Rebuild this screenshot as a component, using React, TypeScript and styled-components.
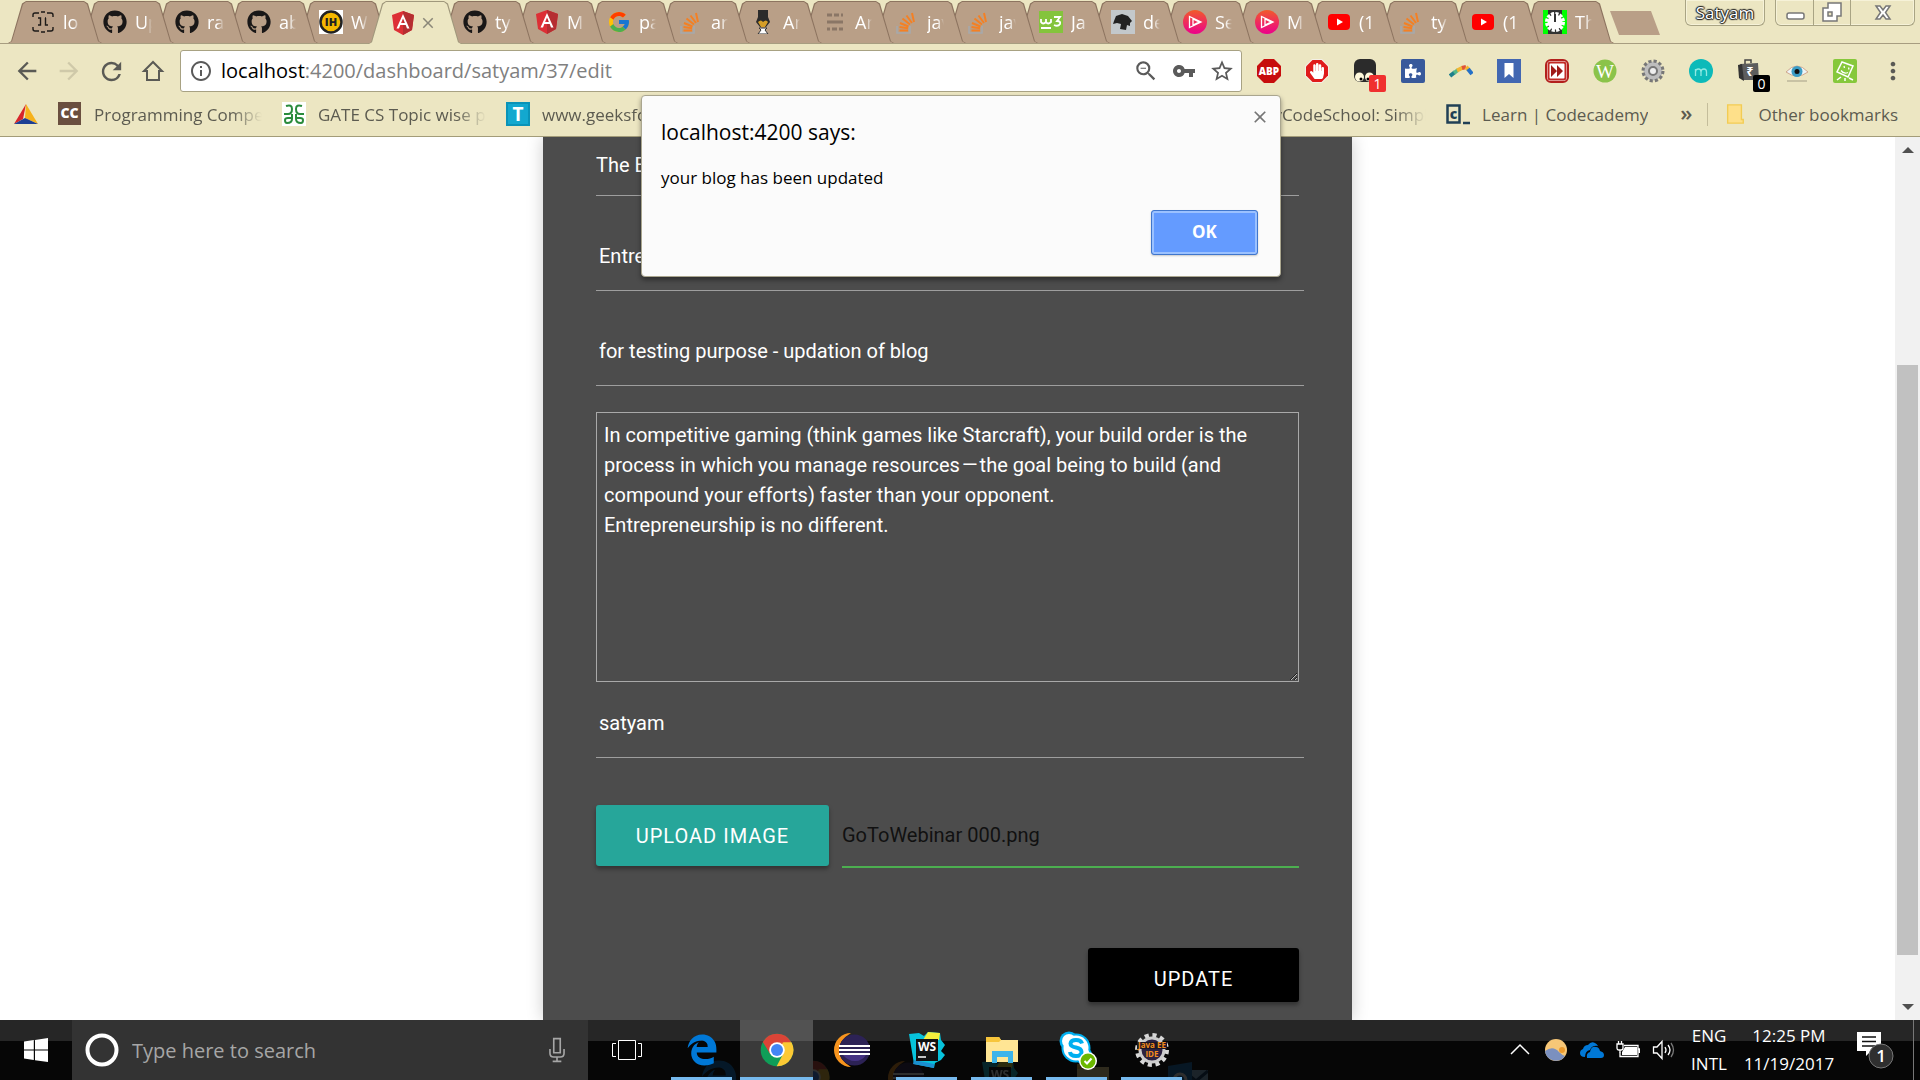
import React from 'react';
import styled, { createGlobalStyle } from 'styled-components';
import { FaGithub, FaHandPaper, FaPuzzlePiece } from 'react-icons/fa';
import { FaEdgeLegacy } from 'react-icons/fa6';
import { FcGoogle } from 'react-icons/fc';
import {
  MdArrowBack, MdArrowForward, MdRefresh, MdInfoOutline, MdZoomOut, MdVpnKey, MdStarBorder, MdMoreVert, MdClose,
} from 'react-icons/md';

const ui = '"Open Sans", "Noto Sans", sans-serif';

const Global = createGlobalStyle`
  * { box-sizing: border-box; }
  body { margin: 0; background: #fff; font-family: ${ui}; }
  button, input, textarea { font: inherit; margin: 0; border: 0; padding: 0; background: none; color: inherit; outline: none; }
  svg { display: block; flex: none; }
`;

const Screen = styled.div`
  position: relative;
  display: flex;
  flex-direction: column;
  height: 100vh;
  overflow: hidden;
`;

/* ---------- Browser frame ---------- */

const Frame = styled.header`
  flex: none;
  background: #ece6c2;
  border-bottom: 1px solid #a39c79;
`;

const TitleBar = styled.div`
  display: flex;
  height: 44px;
  padding-left: 8px;
  border-bottom: 1px solid #a79d80;
`;

const TabStrip = styled.nav`
  display: flex;
  flex: 1;
  min-width: 0;
  padding-top: 1px;
`;

const shape = 'polygon(0 100%, 3px 96%, 14px 6%, 18px 0, 76px 0, 80px 6%, 91px 96%, 94px 100%)';

const Tab = styled.button<{ $active?: boolean; $order: number }>`
  position: relative;
  z-index: ${(p) => (p.$active ? 40 : p.$order)};
  display: flex;
  flex: none;
  align-items: center;
  width: 94px;
  height: ${(p) => (p.$active ? 43 : 42)}px;
  margin-right: -22px;
  padding-left: 23px;
  gap: ${(p) => (p.$active ? 4 : 8)}px;
  isolation: isolate;
  color: #fff;
  font-size: 18px;
  &::before, &::after {
    content: '';
    position: absolute;
    z-index: -1;
    clip-path: ${shape};
    width: 94px;
    inset: 0;
    background: ${(p) => (p.$active ? '#a0987c' : '#8d7460')};
  }
  &::after {
    inset: 1px 0 0 0;
    width: 92px;
    margin-left: 1px;
    clip-path: polygon(0 100%, 3px 96%, 14px 6%, 17px 0, 75px 0, 78px 6%, 89px 96%, 92px 100%);
    background: ${(p) => (p.$active ? '#ece6c2' : '#b99f87')};
  }
`;

const TabTitle = styled.span`
  width: 17px;
  overflow: hidden;
  text-align: left;
  white-space: nowrap;
  mask-image: linear-gradient(90deg, #000 60%, transparent);
`;

const NewTab = styled.button`
  width: 50px;
  height: 24px;
  margin: 10px 0 0 18px;
  background: #b99f87;
  clip-path: polygon(0 0, 41px 0, 50px 100%, 9px 100%);
`;

const WindowControls = styled.div`
  display: flex;
  flex: none;
  gap: 10px;
  padding-right: 5px;
`;

const Glass = styled.div`
  display: flex;
  height: 26px;
  border: 1px solid #a9a484;
  border-top: 0;
  border-radius: 0 0 6px 6px;
  box-shadow: inset 0 0 0 1px #f6f2d8;
`;

const Profile = styled.button`
  width: 78px;
  color: #fff;
  font-size: 17px;
  line-height: 25px;
  text-shadow: 0 0 2px #222, 1px 0 1px #222, -1px 0 1px #222, 0 1px 1px #222, 0 -1px 1px #222;
`;

const WindowButton = styled.button<{ $wide?: boolean }>`
  display: grid;
  place-items: center;
  width: ${(p) => (p.$wide ? 64 : 37)}px;
  & + & { border-left: 1px solid #a9a484; }
`;

const Toolbar = styled.div`
  display: flex;
  align-items: center;
  height: 54px;
  padding: 0 3px 0 6px;
`;

const NavButton = styled.button<{ $dim?: boolean }>`
  display: grid;
  flex: none;
  place-items: center;
  width: 42px;
  height: 42px;
  color: ${(p) => (p.$dim ? '#cfc9a9' : '#5a5a55')};
`;

const Omnibox = styled.div`
  display: flex;
  flex: 1;
  align-items: center;
  height: 42px;
  margin: 0 3px 0 6px;
  padding: 0 8px;
  border: 1px solid #a8a283;
  border-radius: 3px;
  background: #fff;
  color: #5a5a5a;
`;

const Url = styled.div`
  flex: 1;
  margin-left: 8px;
  font-size: 20px;
  line-height: 40px;
  color: #808080;
  b { color: #000; font-weight: 400; }
`;

const OmniButton = styled.button`
  display: grid;
  place-items: center;
  width: 38px;
  height: 38px;
  &:last-child { width: 24px; margin-left: 6px; }
`;

const Extension = styled.button`
  position: relative;
  display: grid;
  flex: none;
  place-items: center;
  width: 48px;
  height: 42px;
`;

const Badge = styled.span<{ $bg: string }>`
  position: absolute;
  right: 3px;
  bottom: 0;
  width: 17px;
  height: 17px;
  border-radius: 2px;
  background: ${(p) => p.$bg};
  color: #fff;
  font-size: 14px;
  line-height: 17px;
  text-align: center;
`;

const Bookmarks = styled.nav`
  display: flex;
  align-items: center;
  height: 38px;
  padding: 0 22px 6px 14px;
  color: #5c5b50;
  font-size: 17px;
`;

const Bookmark = styled.a<{ $clip?: boolean }>`
  display: flex;
  flex: none;
  align-items: center;
  gap: 12px;
  margin-right: 20px;
  color: inherit;
  text-decoration: none;
  white-space: nowrap;
  span {
    width: ${(p) => (p.$clip ? '168px' : 'auto')};
    overflow: hidden;
    mask-image: ${(p) => (p.$clip ? 'linear-gradient(90deg, #000 82%, transparent)' : 'none')};
  }
`;

const BookmarkEnd = styled.div`
  display: flex;
  align-items: center;
  margin-left: auto;
`;

const More = styled.button`
  margin: 0 15px 4px 12px;
  font-size: 22px;
  font-weight: 600;
  line-height: 24px;
`;

const Folder = styled(Bookmark)`
  margin: 0;
  padding-left: 16px;
  border-left: 1px solid #c4bd9b;
`;

/* ---------- Web page ---------- */

const Viewport = styled.div`
  display: flex;
  flex: 1;
  min-height: 0;
`;

const Page = styled.main`
  flex: 1;
  overflow: hidden;
  background: #fff;
  font-family: Roboto, sans-serif;
  font-size: 20px;
`;

const Panel = styled.form`
  width: 100%;
  max-width: 809px;
  min-height: 100%;
  margin: 0 auto;
  padding: 0 53px;
  background: #4c4c4c;
  box-shadow: 0 0 16px rgba(0, 0, 0, 0.2);
  color: #fff;
`;

const Field = styled.input<{ $first?: boolean; $near?: boolean }>`
  display: block;
  width: ${(p) => (p.$first ? '100%' : 'calc(100% + 5px)')};
  height: ${(p) => (p.$first ? 59 : 69)}px;
  margin-top: ${(p) => (p.$first ? 0 : p.$near ? 7 : 26)}px;
  padding-bottom: ${(p) => (p.$first ? 2 : 0)}px;
  padding-left: ${(p) => (p.$first ? 0 : 3)}px;
  border-bottom: 1px solid #9e9e9e;
`;

const Story = styled.textarea`
  display: block;
  width: 100%;
  height: 270px;
  margin-top: 26px;
  padding: 7px;
  border: 1px solid #a9a9a9;
  line-height: 30px;
  resize: vertical;
`;

const UploadRow = styled.div`
  display: flex;
  gap: 13px;
  height: 61px;
  margin-top: 47px;
`;

const Action = styled.button<{ $dark?: boolean }>`
  flex: none;
  width: ${(p) => (p.$dark ? 211 : 233)}px;
  height: ${(p) => (p.$dark ? 54 : 61)}px;
  padding-top: ${(p) => (p.$dark ? 8 : 0)}px;
  border-radius: 3px;
  background: ${(p) => (p.$dark ? '#000' : '#26a69a')};
  box-shadow: 0 3px 4px rgba(0, 0, 0, 0.35);
  letter-spacing: 1px;
`;

const FileName = styled.input`
  flex: 1;
  min-width: 0;
  height: 63px;
  padding-bottom: 1px;
  border-bottom: 2px solid #4caf50;
  color: #111;
`;

const SubmitRow = styled.div`
  display: flex;
  justify-content: flex-end;
  margin-top: 82px;
`;

const Scrollbar = styled.div`
  display: flex;
  flex: none;
  flex-direction: column;
  width: 25px;
  padding: 0 2px;
  background: #f1f1f1;
`;

const Arrow = styled.button`
  display: grid;
  place-items: center;
  height: 26px;
`;

const Track = styled.div<{ $grow: number; $thumb?: boolean }>`
  flex: ${(p) => p.$grow} 0 0;
  background: ${(p) => (p.$thumb ? '#c1c1c1' : 'transparent')};
`;

/* ---------- Alert ---------- */

const Dialog = styled.section`
  position: absolute;
  z-index: 60;
  top: 95px;
  left: calc(50% + 1px);
  display: flex;
  flex-direction: column;
  width: 640px;
  height: 182px;
  padding: 18px 22px 21px 19px;
  border: 1px solid #aaa68f;
  border-radius: 4px;
  background: #fbfbfb;
  box-shadow: 0 3px 5px rgba(0, 0, 0, 0.4);
  color: #000;
  transform: translateX(-50%);
  h1 { margin: 0; font-size: 21px; font-weight: 400; line-height: 36px; }
  p { margin: 14px 0 0; font-size: 17px; line-height: 28px; }
`;

const CloseButton = styled.button`
  position: absolute;
  top: 11px;
  right: 10px;
  color: #757575;
`;

const OkButton = styled.button`
  align-self: flex-end;
  width: 107px;
  height: 45px;
  margin-top: auto;
  padding-bottom: 3px;
  border: 1px solid #3f76cd;
  border-radius: 3px;
  background: #649bff;
  box-shadow: inset 0 0 0 2px #9bc1ff, 0 1px 2px rgba(0, 0, 0, 0.2);
  color: #fff;
  font-size: 17px;
  font-weight: 700;
`;

/* ---------- Taskbar ---------- */

const Taskbar = styled.footer`
  position: relative;
  display: flex;
  flex: none;
  height: 60px;
  overflow: hidden;
  isolation: isolate;
  background: linear-gradient(#262626 21px, #060606 21px);
  color: #fff;
`;

const Reflections = styled.div`
  position: absolute;
  z-index: -1;
  top: 40px;
  left: 700px;
  display: flex;
  gap: 58px;
  opacity: 0.16;
`;

const Start = styled.button`
  display: grid;
  place-items: center;
  width: 72px;
`;

const Search = styled.label`
  display: flex;
  align-items: center;
  width: 516px;
  padding: 0 18px 0 13px;
  background: #333;
  color: #a6a6a6;
  input {
    flex: 1;
    margin-left: 13px;
    font-size: 20px;
    &::placeholder { color: #a6a6a6; opacity: 1; }
  }
`;

const Apps = styled.nav`
  display: flex;
  gap: 2px;
  margin-left: 2px;
`;

const AppButton = styled.button<{ $open?: boolean; $active?: boolean }>`
  position: relative;
  display: grid;
  place-items: center;
  width: 73px;
  background: ${(p) => (p.$active ? 'linear-gradient(#525252 21px, #3a3a3a 21px)' : 'none')};
  &::after {
    content: '';
    position: absolute;
    right: ${(p) => (p.$active ? 0 : 6)}px;
    bottom: 0;
    left: ${(p) => (p.$active ? 0 : 6)}px;
    height: 3px;
    background: ${(p) => (p.$open || p.$active ? '#76b9ed' : 'none')};
  }
`;

const Tray = styled.div`
  display: flex;
  align-items: center;
  margin-left: auto;
`;

const TrayButton = styled.button<{ $width: number }>`
  display: grid;
  place-items: center;
  width: ${(p) => p.$width}px;
  height: 60px;
  font-size: 17px;
  line-height: 28px;
  text-align: center;
  white-space: nowrap;
`;

const ShowDesktop = styled.button`
  width: 7px;
  height: 60px;
  margin-left: 5px;
  border-left: 1px solid #777;
`;

/* ---------- Drawings ---------- */

const Svg = ({ s = 24, vb = '0 0 24 24', children }: { s?: number; vb?: string; children: React.ReactNode }) => (
  <svg width={s} height={s} viewBox={vb} aria-hidden="true">{children}</svg>
);

const Angular = () => (
  <Svg>
    <path d="M12 0 23 4l-2 15-9 5-9-5L1 4z" fill="#dd2f35" />
    <path d="M12 0 23 4l-2 15-9 5z" fill="#b52e31" />
    <path d="m12 3-6.500 14.500H8L9.300 14h5.400L16 17.500h2.500zm0 4.500L13.900 12h-3.800z" fill="#fff" />
  </Svg>
);
const Brackets = () => (
  <Svg>
    <g fill="none" stroke="#1d1a18" strokeWidth="1.400">
      <path d="M2 7V5q0-2 2-2h4M10 2h4M16 3h4q2 0 2 2v2M2 17v2q0 2 2 2h4M10 22h4M16 21h4q2 0 2-2v-2" />
      <path d="M7 8h2.500v7H7M14.500 8v7H17M14 8h1" />
    </g>
  </Svg>
);
const Hackers = () => (
  <Svg>
    <path d="M0 0h24v24H0z" fill="#fff" />
    <circle cx="12" cy="12" r="10.500" fill="#f5b800" stroke="#222" strokeWidth="2.500" />
    <text x="12" y="16" textAnchor="middle" fontSize="11" fontWeight="800" fill="#222">IH</text>
  </Svg>
);
const Stack = () => (
  <Svg>
    <path d="M2 16v7h13v-7" fill="none" stroke="#a7a9ac" strokeWidth="1.600" />
    <path d="M4.500 20.500H13M4.500 17l8.500 1.300M5 13l8.500 3.500M7.500 8.500l7.500 6M11.500 5.500l5.500 7.500M17 3l2 9" stroke="#f48024" strokeWidth="2" />
  </Svg>
);
const Lamp = () => (
  <Svg>
    <path d="M7 0h10v7l2 5-4 5H9l-4-5 2-5z" fill="#2b2b2b" />
    <path d="M7 12q3-3 5 0 3-3 5 0l-3 5h-4z" fill="#d59e28" />
    <path d="M8 18h8l-2 2 3 4H7l3-4z" fill="#fff" stroke="#333" />
  </Svg>
);
const Lines = () => (
  <Svg><path d="M4 5h5M11 5h5M18 5h2M4 12h16M4 19h3M9 19h5M16 19h4" stroke="#8a7666" strokeWidth="3" /></Svg>
);
const W3 = () => (
  <Svg>
    <path d="M0 1h24v22H0z" fill="#84c43c" />
    <path d="M2 9v3q2 3 5 0V9m0 3q2 3 5 0V9M15 7h6l-3 4q4 0 3 3-2 3-6 1M2 18h10" fill="none" stroke="#fff" strokeWidth="1.800" />
  </Svg>
);
const Dog = () => (
  <Svg>
    <path d="M0 0h24v24H0z" fill="#c3c8cb" />
    <path d="m3 11 2-5 6-2 6 2 4 5-2 2v3l-3-1-1 5-6-1 1-5-4-1-4 1z" fill="#222" />
  </Svg>
);
const Play = () => (
  <Svg>
    <defs><linearGradient id="play" x2="0" y2="1"><stop stopColor="#f15b2a" /><stop offset="1" stopColor="#ec008c" /></linearGradient></defs>
    <circle cx="12" cy="12" r="12" fill="url(#play)" />
    <path d="M6.500 6.500v11L18 12zM10 9v6l6-3z" fill="none" stroke="#fff" strokeWidth="1.300" />
  </Svg>
);
const Tube = () => (
  <Svg><rect x="1" y="4" width="22" height="16" rx="4" fill="#f00" /><path d="m10 8.500 6 3.500-6 3.500z" fill="#fff" /></Svg>
);
const Clock = () => (
  <Svg>
    <path d="M0 0h24v24H0z" fill="#0f0" /><path d="M5 0h14v24H5z" fill="#333" />
    <circle cx="12" cy="12" r="8" fill="none" stroke="#fff" strokeWidth="4" strokeDasharray="3 1.200" />
    <circle cx="12" cy="12" r="7.500" fill="#fff" />
    <path d="M12 4v8" stroke="#333" strokeWidth="2" />
  </Svg>
);
const Home = () => (
  <Svg><path d="M12 3 3 12h3v9h12v-9h3z" fill="none" stroke="currentColor" strokeWidth="2" /></Svg>
);

const octagon = 'M7 0h10l7 7v10l-7 7H7l-7-7V7z';
const Abp = () => (
  <Svg><path d={octagon} fill="#c70d0d" /><text x="12" y="16" textAnchor="middle" fontSize="10" fontWeight="800" fill="#fff">ABP</text></Svg>
);
const Hand = () => (
  <Svg>
    <path d={octagon} fill="#f4f0e6" /><path d="M7.500 1h9L23 7.500v9L16.500 23h-9L1 16.500v-9z" fill="#e01b1b" />
    <g transform="translate(4 4)" color="#fff"><FaHandPaper size={16} /></g>
  </Svg>
);
const Monkey = () => (
  <Svg>
    <rect x="1" y="0" width="22" height="23" rx="6" fill="#2b2b2b" />
    <circle cx="6.500" cy="18" r="4.500" fill="#fff9dc" /><circle cx="16.500" cy="18" r="4.500" fill="#fff9dc" />
    <circle cx="8" cy="20" r="1.500" /><circle cx="15" cy="20" r="1.500" />
  </Svg>
);
const Puzzle = () => (
  <Svg><rect width="24" height="24" rx="2" fill="#38599b" /><g transform="translate(4 4)" color="#fff"><FaPuzzlePiece size={16} /></g></Svg>
);
const Boomerang = () => (
  <Svg>
    <g fill="none" strokeWidth="4">
      <path d="m1 17 5-4" stroke="#1d7f8c" /><path d="m5 14 4-3" stroke="#52b788" /><path d="m8 11.500 6-3" stroke="#f2b632" />
      <path d="m13 9 4-1" stroke="#e0533a" /><path d="m17 8 3 3" stroke="#f2b632" /><path d="m19 10 4 5" stroke="#2470c8" />
    </g>
  </Svg>
);
const Ribbon = () => (
  <Svg><path d="M0 0h24v24H0z" fill="#4267b2" /><path d="M7.500 4h9v15L12 15l-4.500 4z" fill="#fff" /></Svg>
);
const Forward = () => (
  <Svg>
    <rect x="1" y="1" width="22" height="22" rx="5" fill="#fff" stroke="#b3201d" strokeWidth="2" />
    <rect x="3.500" y="3.500" width="17" height="17" rx="2" fill="#fff" stroke="#c22a25" strokeWidth="2" />
    <path d="m6 6 6 6-6 6zM12 6l6 6-6 6z" fill="#a01a18" />
  </Svg>
);
const GreenW = () => (
  <Svg><circle cx="12" cy="12" r="11.500" fill="#8bc34a" /><text x="12" y="18.500" textAnchor="middle" fontSize="19" fontFamily="Liberation Serif, serif" fill="#fff">W</text></Svg>
);
const Gear = () => (
  <Svg>
    <circle cx="12" cy="12" r="9.500" fill="#bbb" stroke="#777" strokeWidth="4" strokeDasharray="3 2" />
    <circle cx="12" cy="12" r="8.500" fill="#bdbdbd" /><circle cx="12" cy="12" r="4" fill="#eee" stroke="#777" strokeWidth="2" />
  </Svg>
);
const Mercury = () => (
  <Svg><circle cx="12" cy="12" r="12" fill="#0dbab9" /><path d="M6.500 17v-7m0 3q0-3 3-3 2.500 0 2.500 3v4m0-4q0-3 3-3 2.500 0 2.500 3v4" fill="none" stroke="#8ee9e2" strokeWidth="1.300" /></Svg>
);
const Bag = () => (
  <Svg>
    <path d="m3 5 18-1 1 17H6z" fill="#5d5d5d" /><path d="m1 6 4-1 2 17-5-3z" fill="#333" />
    <path d="M8 5V1h6v3" fill="none" stroke="#444" strokeWidth="1.500" />
    <text x="13" y="17" textAnchor="middle" fontSize="12" fontWeight="700" fill="#fff">₹</text>
  </Svg>
);
const Eye = () => (
  <Svg>
    <path d="M1 13Q12 1 23 13q-11 8-22 0z" fill="#edf5f7" stroke="#d0a68c" />
    <circle cx="12" cy="12.500" r="5.500" fill="#3b9dc5" /><circle cx="12" cy="12.500" r="2.500" fill="#111" />
    <path d="M2 22h20" stroke="#c8c2a4" strokeWidth="2" />
  </Svg>
);
const Postcard = () => (
  <Svg>
    <rect width="24" height="24" rx="2" fill="#86c83b" />
    <path d="m9 3 11 4-5 11L4 13zM8 18l-4 3M12 19v3M16 19l4 2" fill="none" stroke="#fff" strokeWidth="1.500" />
    <path d="m11 7 .5 2M15.500 8.500l.5 2M8 11.500q3 4 7 2" fill="none" stroke="#fff" strokeWidth="1.300" />
  </Svg>
);

const Prism = () => (
  <Svg><path d="M12 2 0 22l9-5z" fill="#d7262a" /><path d="m12 2 12 20-13-6z" fill="#f6b21b" /><path d="M0 22h24l-13-6z" fill="#1c3f94" /></Svg>
);
const CodeChef = () => (
  <Svg><path d="M0 0h23v23H0z" fill="#6a4f3f" /><text x="11.500" y="16" textAnchor="middle" fontSize="14" fontWeight="800" fill="#fff">CC</text></Svg>
);
const Geeks = () => (
  <Svg>
    <path d="M0 0h24v24H0z" fill="#fff" />
    <path d="M4 4q6-2 6 3 0 5-4 5H2m8 0v5q0 4-5 4-2 0-2-3 0-2 3-2h4M20 4q-6-2-6 3 0 5 4 5h4m-8 0v5q0 4 5 4 2 0 2-3 0-2-3-2h-4" fill="none" stroke="#2a8b3c" strokeWidth="2" />
  </Svg>
);
const Techs = () => (
  <Svg><path d="M0 0h24v24H0z" fill="#0a93b8" /><path d="M2 2h20v20H2z" fill="#13a8cf" /><text x="12" y="19" textAnchor="middle" fontSize="19" fontWeight="700" fill="#fff">T</text></Svg>
);
const Codecademy = () => (
  <Svg>
    <path d="M1.500 3.500h12v17h-12zM17 21h7" fill="none" stroke="#204056" strokeWidth="2.500" />
    <text x="7.500" y="16.500" textAnchor="middle" fontSize="14" fontWeight="800" fill="#204056">c</text>
  </Svg>
);
const FolderIcon = () => (
  <Svg s={22} vb="0 0 20 24"><path d="M2 2h15v16h2v4H2z" fill="#fee08a" stroke="#f2cc54" strokeWidth="1.500" /></Svg>
);

const Windows = () => (
  <Svg><path d="m0 3.400 9.800-1.300v9.400H0zm11-1.500L24 0v11.500H11zM0 12.600h9.800V22L0 20.600zm11 0h13V24l-13-1.800z" fill="#fff" /></Svg>
);
const Mic = () => (
  <Svg s={26}><path d="M9 1.500h6v13H9zM5.500 11v4q0 3.500 3.500 3.500h6q3.500 0 3.500-3.500v-4M12 18.500V22M8 22.500h8" fill="none" stroke="#a6a6a6" strokeWidth="1.500" /></Svg>
);
const TaskView = () => (
  <Svg s={30} vb="0 0 30 30"><path d="M6.500 5.500h17v19h-17zM4 8.500H.5v13H4M26 8.500h3.500v13H26" fill="none" stroke="#fff" /></Svg>
);
const Chrome = () => (
  <Svg s={34} vb="0 0 48 48">
    <circle cx="24" cy="24" r="23" fill="#0f9d58" />
    <path d="M24 24 4 12.600a23 23 0 0 1 40 0z" fill="#db4437" />
    <path d="M24 13h20.400a23 23 0 0 1-20.900 34L33 29z" fill="#fcc934" />
    <path d="M4 12.600 14.500 30 24 24l9-11z" fill="#db4437" />
    <circle cx="24" cy="24" r="11" fill="#fff" /><circle cx="24" cy="24" r="8.500" fill="#4285f4" />
  </Svg>
);
const Eclipse = () => (
  <Svg s={36} vb="0 0 36 36">
    <path d="M17 1A17 17 0 0 0 17 35Q5 28 5 18T17 1z" fill="#f7941e" />
    <circle cx="20.500" cy="18" r="15.500" fill="#2c2255" />
    <path d="M9 23h23q-4 6-11 6T9 23z" fill="#453384" />
    <path d="M5 14h31M5 18h31M5 22h31" stroke="#fff" strokeWidth="2" />
  </Svg>
);
const WebStorm = () => (
  <Svg s={36} vb="0 0 36 36">
    <path d="m0 2 10-1 5 3 4-4 12 1 1 7 4 5-4 6 4 4-4 5-6 3-1 5-20-4z" fill="#07c3dc" />
    <path d="m19 0 12 1-1 7H14z" fill="#f5ee3c" /><path d="m5 28 20 4v4L4 32z" fill="#1b8fd0" />
    <path d="M7 7h22v22H7z" fill="#111" />
    <text x="18" y="19" textAnchor="middle" fontSize="12" fontWeight="700" fill="#fff">WS</text><path d="M9 25h8" stroke="#fff" strokeWidth="1.500" />
  </Svg>
);
const Explorer = () => (
  <Svg s={34} vb="0 0 34 34">
    <path d="M1 4h13l2 3h17v22H1z" fill="#ffe594" /><path d="M1 4h13l2 3-2 2H1z" fill="#f7c53b" />
    <path d="M7 30V18h21v12h-5v-6H12v6z" fill="#3db4ea" />
  </Svg>
);
const Skype = () => (
  <Svg s={40} vb="0 0 40 40">
    <circle cx="19" cy="18" r="14.500" fill="#00aff0" /><circle cx="12" cy="11" r="9.500" fill="#00aff0" /><circle cx="26" cy="25" r="9" fill="#00aff0" />
    <circle cx="19" cy="18" r="12.500" fill="#fff" /><circle cx="12" cy="11" r="7" fill="#fff" /><circle cx="25" cy="24" r="7.500" fill="#fff" />
    <path d="M25 13.500q-1-3.500-6-3.500t-5.500 3.500q0 3 5.500 4t5.500 4.500q0 4-5.500 4t-6-4" fill="none" stroke="#00aff0" strokeWidth="4" />
    <circle cx="31" cy="31" r="9" fill="#fff" /><circle cx="31" cy="31" r="7.500" fill="#6bb700" /><path d="m27.500 31 2.500 2.500 4.500-5" fill="none" stroke="#fff" strokeWidth="2" />
  </Svg>
);
const JavaIde = () => (
  <Svg s={36} vb="0 0 36 36">
    <circle cx="18" cy="18" r="14.500" fill="none" stroke="#d8d8d8" strokeWidth="5" strokeDasharray="4 3.590" />
    <circle cx="18" cy="18" r="12" fill="#2b2140" stroke="#ccc" strokeWidth="3" />
    <path d="M3 10h30v7H3z" fill="#1c1626" />
    <text x="18" y="16" textAnchor="middle" fontSize="8" fontWeight="700" fill="#f28c1c">Java EE</text>
    <text x="18" y="25" textAnchor="middle" fontSize="8" fontWeight="700" fill="#f28c1c">IDE</text>
  </Svg>
);
const Outlook = () => (
  <Svg s={40} vb="0 0 40 36"><path d="M16 8h24v22H16z" fill="#8ab8e0" /><path d="m16 9 12 10L40 9" fill="none" stroke="#06345c" strokeWidth="3" /><path d="m0 4 24-4v36L0 32z" fill="#0f6fc0" /><circle cx="12" cy="18" r="6" fill="none" stroke="#fff" strokeWidth="3" /></Svg>
);
const Chevron = () => (
  <Svg s={20} vb="0 0 20 20"><path d="m1 14 9-9 9 9" fill="none" stroke="#fff" strokeWidth="1.500" /></Svg>
);
const Moon = () => (
  <Svg s={22} vb="0 0 22 22"><circle cx="11" cy="11" r="11" fill="#f7c777" /><path d="M0 12q8-6 14 1 3 3 6 4a11 11 0 0 1-20-5z" fill="#7b90bf" /><circle cx="17" cy="11" r="3" fill="#ec9a2d" /></Svg>
);
const OneDrive = () => (
  <Svg><path d="M7 20q-1-5 3-6 1-6 6-5 3 0 4 4 4 1 4 4 0 3-3 3z" fill="#0078d7" /><path d="M5 19q-5 0-5-4 0-3 3-4 1-4 5-4 3-4 7-2 2 1 3 3-6-1-8 4-5 1-5 7z" fill="#0078d7" /></Svg>
);
const Battery = () => (
  <Svg><path d="M8 7.500h14v11H4v-4M22.500 11h1v4" fill="none" stroke="#fff" strokeWidth="1.300" /><path d="M9 9h12v8H6v-3z" fill="#fff" /><path d="M1 6h6v4q0 2-2 2H3q-2 0-2-2zM2.500 6V3M5.500 6V3M4 12v3" fill="none" stroke="#fff" strokeWidth="1.300" /></Svg>
);
const Speaker = () => (
  <Svg><path d="M1.500 9H5l5-5.500v17L5 15H1.500zM13 9q2 3 0 6M16 7q4 5 0 10" fill="none" stroke="#fff" strokeWidth="1.300" /><path d="M19 5q5 7 0 14" fill="none" stroke="#777" strokeWidth="1.300" /></Svg>
);
const Notice = () => (
  <Svg s={38} vb="0 0 38 38">
    <path d="M1 1h24v19H15l-5 5v-5H1z" fill="#fff" /><path d="M6 6h14M6 10.500h14M6 15h14" stroke="#111" strokeWidth="1.300" />
    <circle cx="25" cy="25" r="12" fill="#2f2f2f" stroke="#777" /><text x="25" y="31" textAnchor="middle" fontSize="17" fontWeight="600" fill="#fff">1</text>
  </Svg>
);
const Triangle = ({ down }: { down?: boolean }) => (
  <svg width="12" height="6" viewBox="0 0 12 6" aria-hidden="true"><path d={down ? 'M0 0h12L6 6z' : 'M0 6h12L6 0z'} fill="#505050" /></svg>
);

/* ---------- Content ---------- */

const git = <FaGithub size={24} color="#191717" />;
const tabs: [React.ReactNode, string][] = [
  [<Brackets />, 'lo'], [git, 'Up'], [git, 'ra'], [git, 'ab'], [<Hackers />, 'W'], [<Angular />, ''],
  [git, 'ty'], [<Angular />, 'M'], [<FcGoogle size={24} />, 'pa'], [<Stack />, 'an'], [<Lamp />, 'An'], [<Lines />, 'An'],
  [<Stack />, 'jav'], [<Stack />, 'jav'], [<W3 />, 'Ja'], [<Dog />, 'de'], [<Play />, 'Se'], [<Play />, 'M'],
  [<Tube />, '(1'], [<Stack />, 'ty'], [<Tube />, '(1'], [<Clock />, 'Th'],
];

const extensions: [string, React.ReactNode, React.ReactNode?][] = [
  ['Adblock Plus', <Abp />], ['AdBlock', <Hand />], ['Tampermonkey', <Monkey />, <Badge $bg="#f0302f">1</Badge>],
  ['Puzzle', <Puzzle />], ['Boomerang', <Boomerang />], ['Reader', <Ribbon />], ['Skip', <Forward />], ['Words', <GreenW />],
  ['Settings', <Gear />], ['Mercury', <Mercury />], ['Shopping', <Bag />, <Badge $bg="#000">0</Badge>], ['Eye care', <Eye />], ['Postcard', <Postcard />],
];

const story = `In competitive gaming (think games like Starcraft), your build order is the process in which you manage resources\u200a—\u200athe goal being to build (and compound your efforts) faster than your opponent.
Entrepreneurship is no different.`;

export default function App() {
  return (
    <Screen>
      <Global />
      <Frame>
        <TitleBar>
          <TabStrip aria-label="Tabs">
            {tabs.map(([icon, title], i) => (
              <Tab key={i} $active={!title} $order={30 - i} aria-label={title || 'Current tab'}>
                {icon}
                {title ? <TabTitle>{title}</TabTitle> : <MdClose size={18} color="#8a8778" />}
              </Tab>
            ))}
            <NewTab aria-label="New tab" />
          </TabStrip>
          <WindowControls>
            <Glass><Profile>Satyam</Profile></Glass>
            <Glass>
              <WindowButton aria-label="Minimize">
                <Svg><rect x="4" y="12" width="17" height="6" rx="2" fill="#fff" stroke="#777" strokeWidth="1.500" /></Svg>
              </WindowButton>
              <WindowButton aria-label="Restore">
                <Svg><path d="M8 2h13v13h-4v5H3V7h5zM8 11v4h4v-4z" fill="#fff" stroke="#777" strokeWidth="1.500" /></Svg>
              </WindowButton>
              <WindowButton $wide aria-label="Close window">
                <Svg><path d="M5 5h4l3 4 3-4h4l-4.500 6.500L19 18h-4l-3-4-3 4H5l4.500-6.500z" fill="#fff" stroke="#777" strokeWidth="1.500" /></Svg>
              </WindowButton>
            </Glass>
          </WindowControls>
        </TitleBar>
        <Toolbar>
          <NavButton aria-label="Back"><MdArrowBack size={28} /></NavButton>
          <NavButton aria-label="Forward" $dim><MdArrowForward size={28} /></NavButton>
          <NavButton aria-label="Reload"><MdRefresh size={29} /></NavButton>
          <NavButton aria-label="Home"><Home /></NavButton>
          <Omnibox>
            <MdInfoOutline size={24} />
            <Url><b>localhost</b>:4200/dashboard/satyam/37/edit</Url>
            <OmniButton aria-label="Zoom"><MdZoomOut size={26} /></OmniButton>
            <OmniButton aria-label="Passwords"><MdVpnKey size={24} /></OmniButton>
            <OmniButton aria-label="Bookmark this page"><MdStarBorder size={26} /></OmniButton>
          </Omnibox>
          {extensions.map(([name, icon, badge]) => (
            <Extension key={name} aria-label={name}>{icon}{badge}</Extension>
          ))}
          <Extension aria-label="Menu"><MdMoreVert size={28} color="#5a5a55" /></Extension>
        </Toolbar>
        <Bookmarks aria-label="Bookmarks">
          <Bookmark href="#" aria-label="Prism"><Prism /></Bookmark>
          <Bookmark href="#" $clip><CodeChef /><span>Programming Compet</span></Bookmark>
          <Bookmark href="#" $clip><Geeks /><span>GATE CS Topic wise pre</span></Bookmark>
          <Bookmark href="#" $clip><Techs /><span>www.geeksforgeeks</span></Bookmark>
          <BookmarkEnd>
            <Bookmark href="#" $clip><span>MyCodeSchool: Simple</span></Bookmark>
            <Bookmark href="#"><Codecademy /><span>Learn | Codecademy</span></Bookmark>
            <More aria-label="More bookmarks">»</More>
            <Folder href="#"><FolderIcon /><span>Other bookmarks</span></Folder>
          </BookmarkEnd>
        </Bookmarks>
      </Frame>

      <Viewport>
        <Page>
          <Panel onSubmit={(e) => e.preventDefault()}>
            <Field $first aria-label="Title" defaultValue="The Build Order" />
            <Field aria-label="Category" defaultValue="Entrepreneurship" />
            <Field aria-label="Description" defaultValue="for testing purpose - updation of blog" />
            <Story aria-label="Body" spellCheck={false} defaultValue={story} />
            <Field $near aria-label="Author" defaultValue="satyam" />
            <UploadRow>
              <Action type="button">UPLOAD IMAGE</Action>
              <FileName aria-label="Image file" readOnly value="GoToWebinar 000.png" />
            </UploadRow>
            <SubmitRow><Action $dark type="submit">UPDATE</Action></SubmitRow>
          </Panel>
        </Page>
        <Scrollbar>
          <Arrow aria-label="Scroll up"><Triangle /></Arrow>
          <Track $grow={202} /><Track $grow={590} $thumb /><Track $grow={39} />
          <Arrow aria-label="Scroll down"><Triangle down /></Arrow>
        </Scrollbar>
      </Viewport>

      <Dialog role="alertdialog" aria-labelledby="alert-title">
        <h1 id="alert-title">localhost:4200 says:</h1>
        <p>your blog has been updated</p>
        <CloseButton aria-label="Close"><MdClose size={20} /></CloseButton>
        <OkButton>OK</OkButton>
      </Dialog>

      <Taskbar>
        <Reflections aria-hidden="true">
          <FaEdgeLegacy size={38} color="#0078d7" /><Chrome /><Eclipse /><WebStorm /><Explorer /><Outlook />
        </Reflections>
        <Start aria-label="Start"><Windows /></Start>
        <Search>
          <Svg s={34} vb="0 0 34 34"><circle cx="17" cy="17" r="14.500" fill="none" stroke="#fff" strokeWidth="4" /></Svg>
          <input aria-label="Search" placeholder="Type here to search" />
          <Mic />
        </Search>
        <Apps>
          <AppButton aria-label="Task view"><TaskView /></AppButton>
          <AppButton aria-label="Edge" $open><FaEdgeLegacy size={32} color="#0078d7" /></AppButton>
          <AppButton aria-label="Chrome" $active><Chrome /></AppButton>
          <AppButton aria-label="Eclipse"><Eclipse /></AppButton>
          <AppButton aria-label="WebStorm" $open><WebStorm /></AppButton>
          <AppButton aria-label="File Explorer" $open><Explorer /></AppButton>
          <AppButton aria-label="Skype" $open><Skype /></AppButton>
          <AppButton aria-label="Java EE IDE" $open><JavaIde /></AppButton>
        </Apps>
        <Tray>
          <TrayButton $width={36} aria-label="Hidden icons"><Chevron /></TrayButton>
          <TrayButton $width={36} aria-label="Night light"><Moon /></TrayButton>
          <TrayButton $width={36} aria-label="OneDrive"><OneDrive /></TrayButton>
          <TrayButton $width={36} aria-label="Battery"><Battery /></TrayButton>
          <TrayButton $width={36} aria-label="Volume"><Speaker /></TrayButton>
          <TrayButton $width={54}><span>ENG<br />INTL</span></TrayButton>
          <TrayButton $width={106}><span>12:25 PM<br />11/19/2017</span></TrayButton>
          <TrayButton $width={66} aria-label="Notifications"><Notice /></TrayButton>
          <ShowDesktop aria-label="Show desktop" />
        </Tray>
      </Taskbar>
    </Screen>
  );
}
